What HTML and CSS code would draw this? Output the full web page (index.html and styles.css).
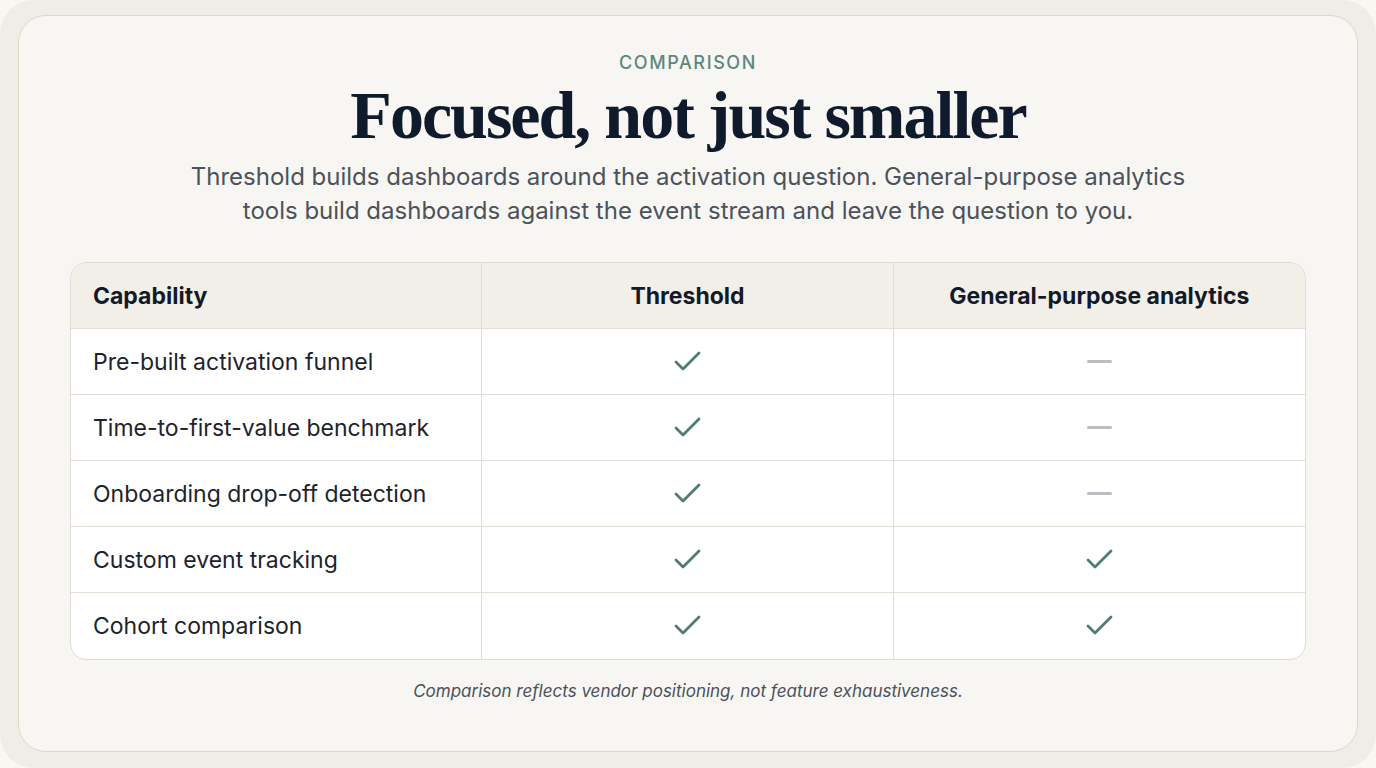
FILE: index.html
```html
<!DOCTYPE html>
<html lang="en">
<head>
<meta charset="utf-8">
<title>Comparison</title>
<link rel="stylesheet" href="styles.css">
</head>
<body>
<div class="frame">
  <section class="card">
    <div class="eyebrow">COMPARISON</div>
    <h1 class="title">Focused, not just smaller</h1>
    <p class="lead">Threshold builds dashboards around the activation question. General-purpose analytics tools build dashboards against the event stream and leave the question to you.</p>
    <table class="cmp">
      <thead>
        <tr><th class="cap">Capability</th><th>Threshold</th><th>General-purpose analytics</th></tr>
      </thead>
      <tbody>
        <tr><td class="cap">Pre-built activation funnel</td><td><svg class="check" viewBox="0 0 28 24"><path d="M3 12l7 7L26 3"/></svg></td><td><span class="dash"></span></td></tr>
        <tr><td class="cap">Time-to-first-value benchmark</td><td><svg class="check" viewBox="0 0 28 24"><path d="M3 12l7 7L26 3"/></svg></td><td><span class="dash"></span></td></tr>
        <tr><td class="cap">Onboarding drop-off detection</td><td><svg class="check" viewBox="0 0 28 24"><path d="M3 12l7 7L26 3"/></svg></td><td><span class="dash"></span></td></tr>
        <tr><td class="cap">Custom event tracking</td><td><svg class="check" viewBox="0 0 28 24"><path d="M3 12l7 7L26 3"/></svg></td><td><svg class="check" viewBox="0 0 28 24"><path d="M3 12l7 7L26 3"/></svg></td></tr>
        <tr><td class="cap">Cohort comparison</td><td><svg class="check" viewBox="0 0 28 24"><path d="M3 12l7 7L26 3"/></svg></td><td><svg class="check" viewBox="0 0 28 24"><path d="M3 12l7 7L26 3"/></svg></td></tr>
      </tbody>
    </table>
    <p class="note">Comparison reflects vendor positioning, not feature exhaustiveness.</p>
  </section>
</div>
</body>
</html>
```
FILE: styles.css
```css
* { box-sizing: border-box; }
html, body { margin: 0; padding: 0; }
body {
  background: #f8f7f3;
  font-family: Inter, "Noto Sans", sans-serif;
  width: 1376px;
  height: 768px;
  overflow: hidden;
}
.frame {
  width: 1376px;
  height: 768px;
  background: #efede5;
  border-radius: 34px;
  padding: 15px 18px 16px 18px;
}
.card {
  height: 100%;
  background: #f7f6f2;
  border: 1px solid #dcd8ce;
  border-radius: 28px;
  display: flex;
  flex-direction: column;
  align-items: center;
  padding: 35px 51px 0 51px;
}
.eyebrow {
  font-size: 18px;
  line-height: 24px;
  font-weight: 500;
  letter-spacing: 1.6px;
  color: #5b887e;
}
.title {
  margin: 6px 0 0 0;
  font-family: "Liberation Serif", "Times New Roman", serif;
  font-weight: 700;
  font-size: 68px;
  line-height: 68px;
  letter-spacing: -2px;
  color: #0f1a2c;
}
.lead {
  margin: 11px 0 0 0;
  max-width: 1010px;
  text-align: center;
  font-size: 24px;
  line-height: 34px;
  color: #4b525b;
}
.cmp {
  margin-top: 34px;
  width: 1236px;
  border-collapse: separate;
  border-spacing: 0;
  border: 1px solid #dfdbd1;
  border-radius: 16px;
  overflow: hidden;
  table-layout: fixed;
  background: #ffffff;
}
.cmp th, .cmp td {
  height: 66px;
  padding: 0 22px;
  text-align: center;
  vertical-align: middle;
  border-right: 1px solid #e2ded5;
  border-bottom: 1px solid #e2ded5;
  font-size: 23px;
}
.cmp th:last-child, .cmp td:last-child { border-right: none; }
.cmp tbody tr:last-child td { border-bottom: none; }
.cmp th {
  background: #f2efe8;
  font-weight: 700;
  color: #121a29;
  height: 66px;
}
.cmp td {
  color: #1d232d;
  font-weight: 400;
}
.cmp .cap { text-align: left; }
.check {
  display: block;
  margin: 0 auto;
  width: 28px;
  height: 24px;
  fill: none;
  stroke: #4f7c73;
  stroke-width: 2.8;
  stroke-linecap: round;
  stroke-linejoin: round;
}
.dash {
  display: block;
  margin: 0 auto;
  width: 25px;
  height: 3px;
  border-radius: 2px;
  background: #babdc1;
}
.note {
  margin: 19px 0 0 0;
  font-size: 17px;
  line-height: 24px;
  font-style: italic;
  color: #4b515a;
}
```
